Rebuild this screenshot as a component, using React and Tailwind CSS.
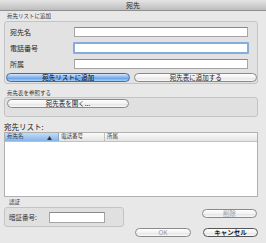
const font = { fontFamily: '"Noto Sans CJK JP", "Liberation Sans", sans-serif' };

function AquaButton({ children, blue, bold, disabled, className = '' }) {
  const base = 'flex items-center justify-center rounded-full border h-[9px] text-[6.5px] leading-none';
  const skin = blue
    ? 'border-[#4a6a9a] bg-[linear-gradient(#d4e6fb,#7fb2ee_50%,#5b98e4_51%,#a6d2fb)] text-black'
    : 'border-[#8a8a8a] bg-[linear-gradient(#ffffff,#f2f2f2_50%,#e2e2e2_51%,#f8f8f8)]';
  return (
    <div className={`${base} ${skin} ${bold ? 'font-bold border-[#555]' : ''} ${disabled ? 'text-[#9a9a9a]' : 'text-[#222]'} ${className}`}>
      {children}
    </div>
  );
}

function Field({ label, focused }) {
  return (
    <div className="flex items-center h-[10px]">
      <span className="w-[69px] pl-[5px] text-[7px] leading-none text-[#222]">{label}</span>
      {focused ? (
        <div className="w-[176px] h-[12px] rounded-[1px] border-2 border-[#86acdc] bg-white -ml-[1px]" />
      ) : (
        <div className="w-[174px] h-[10px] border border-[#a5a5a5] border-t-[#8a8a8a] bg-white" />
      )}
    </div>
  );
}

export default function App() {
  return (
    <div className="w-[266px] h-[243px] bg-[#e8e8e8] overflow-hidden" style={font}>
      {/* title bar */}
      <div className="h-[11px] flex items-center justify-center border-b border-[#8e8e8e] bg-[linear-gradient(#e4e4e4,#bdbdbd)] text-[7px] leading-none text-[#222]">
        宛先
      </div>

      <div className="pl-[4px] pr-[8px]">
        {/* group 1 */}
        <div className="h-[9px] mt-[1px] pl-[3px] flex items-center text-[5.5px] leading-none text-[#333]">宛先リストに追加</div>
        <div className="h-[63px] rounded-[3px] border border-[#c4c4c4] bg-[#e2e2e2] flex flex-col pt-[5px]">
          <div className="flex flex-col gap-[6px]">
            <Field label="宛先名" />
            <div className="h-[10px] flex items-center">
              <Field label="電話番号" focused />
            </div>
            <Field label="所属" />
          </div>
          <div className="flex gap-[4px] mt-[4px] pl-[1px]">
            <AquaButton blue className="w-[126px]">宛先リストに追加</AquaButton>
            <AquaButton className="w-[124px]">宛先表に追加する</AquaButton>
          </div>
        </div>

        {/* group 2 */}
        <div className="h-[13px] pl-[3px] pt-[6px] flex items-center text-[5.5px] leading-none text-[#333]">宛先表を参照する</div>
        <div className="h-[20px] rounded-[3px] border border-[#c4c4c4] bg-[#e0e0e0] pt-[1px] pl-[2px]">
          <AquaButton className="w-[122px]">宛先表を開く...</AquaButton>
        </div>

        {/* list */}
        <div className="h-[15px] pt-[4px] flex items-center text-[7.5px] leading-none text-[#222]">宛先リスト:</div>
        <div className="h-[65px] border border-[#b0b0b0] bg-white">
          <div className="flex h-[9px] border-b border-[#c0c0c0] text-[5.5px] leading-none text-[#333]">
            <div className="w-[54px] flex items-center justify-between px-[2px] bg-[linear-gradient(#c4dcf6,#85b4e8)] border-r border-[#8aa8cc]">
              <span>宛先名</span>
              <span className="text-[5px] mr-[4px]">▲</span>
            </div>
            <div className="w-[46px] flex items-center px-[2px] bg-[linear-gradient(#fafafa,#e4e4e4)] border-r border-[#c0c0c0]">電話番号</div>
            <div className="flex-1 flex items-center px-[2px] bg-[linear-gradient(#fafafa,#e4e4e4)]">所属</div>
          </div>
        </div>

        {/* bottom */}
        <div className="flex justify-between">
          <div className="flex flex-col">
            <div className="h-[10px] pl-[5px] pt-[2px] flex items-center text-[5.5px] leading-none text-[#333]">認証</div>
            <div className="w-[120px] h-[20px] rounded-[3px] border border-[#c4c4c4] bg-[#e0e0e0] flex items-center">
              <span className="w-[44px] pl-[4px] text-[6.5px] leading-none text-[#333]">暗証番号:</span>
              <div className="w-[56px] h-[11px] border border-[#a5a5a5] border-t-[#8a8a8a] bg-white" />
            </div>
          </div>
          <div className="flex flex-col items-end pt-[12px]">
            <AquaButton disabled className="w-[55px] mr-[1px]">削除</AquaButton>
            <div className="flex gap-[12px] mt-[10px]">
              <AquaButton disabled className="w-[56px]">OK</AquaButton>
              <AquaButton bold className="w-[55px]">キャンセル</AquaButton>
            </div>
          </div>
        </div>
      </div>
    </div>
  );
}
